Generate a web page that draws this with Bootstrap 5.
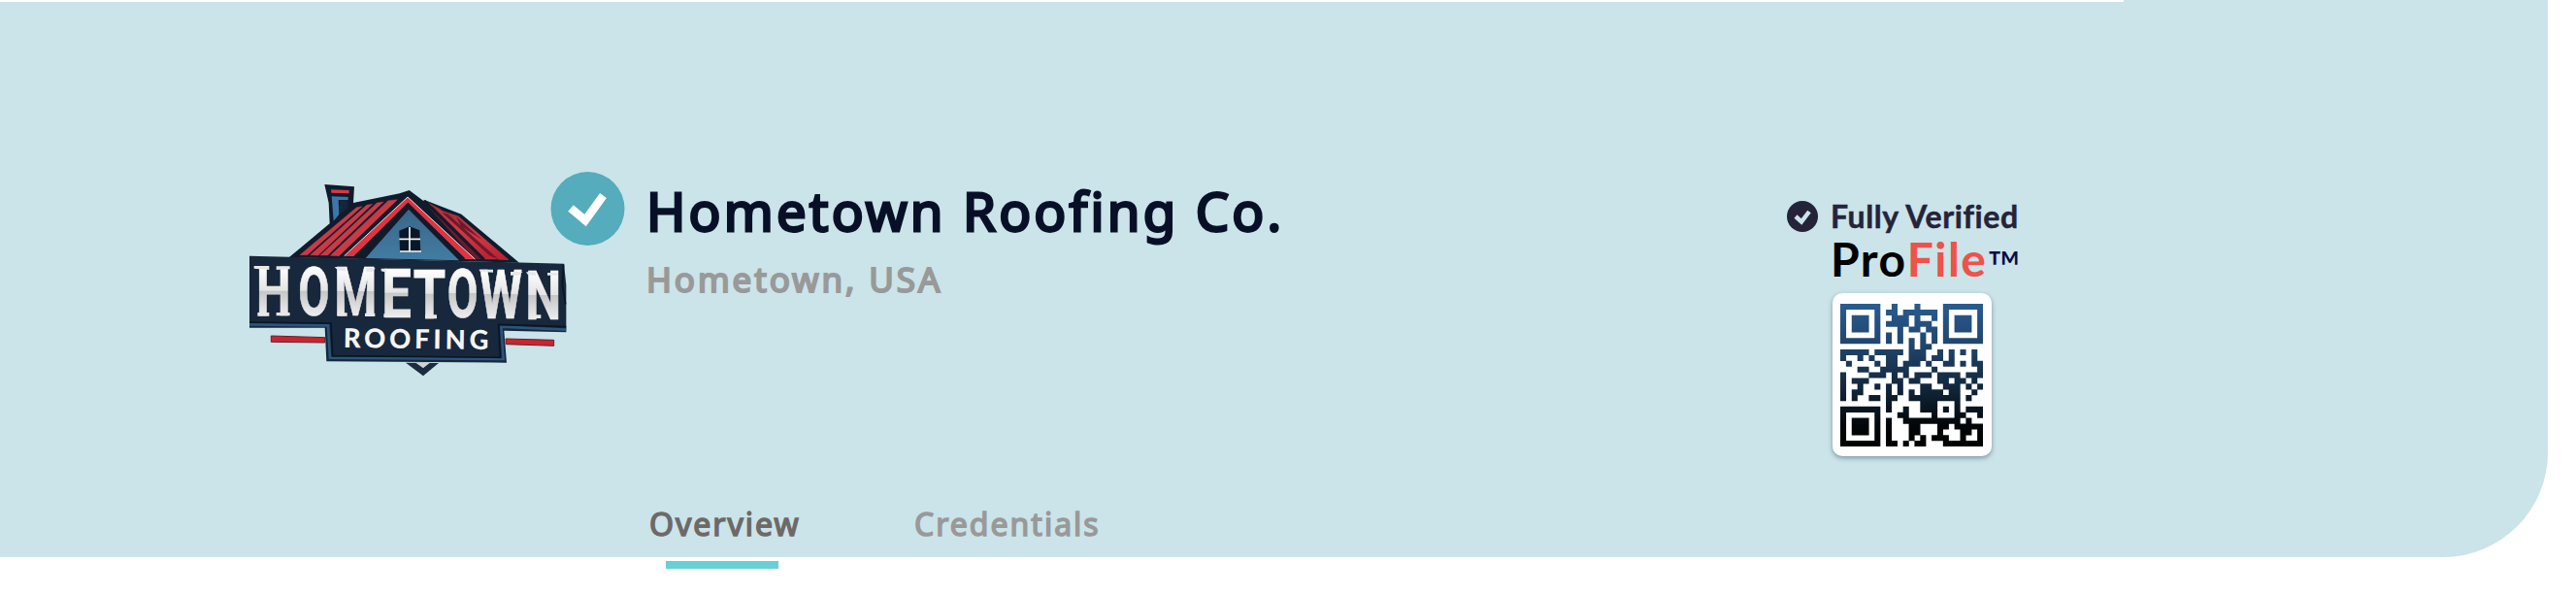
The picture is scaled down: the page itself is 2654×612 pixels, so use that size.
<!DOCTYPE html>
<html lang="en">
<head>
<meta charset="utf-8">
<title>Hometown Roofing Co.</title>
<meta name="viewport" content="width=device-width, initial-scale=1">
<link href="https://cdn.jsdelivr.net/npm/bootstrap@5.3.0/dist/css/bootstrap.min.css" rel="stylesheet">
<style>
body{background:#fff;font-family:"Noto Sans",sans-serif;overflow:hidden}
.hero{width:2625px;height:574px;background:linear-gradient(#fff,#fff) 0 0/2188px 2px no-repeat #cae4e9;border-bottom-right-radius:108px;padding-left:256px}
.hero-main{height:520px}
.logo{width:328px;height:200px;margin-top:189px;margin-right:-17px;flex:none}
.tick{width:77px;height:77px;margin-top:177px;flex:none}
.company{margin:185px 0 0 22px;width:1175px}
.company h1{font-size:54.5px;line-height:64px;font-weight:400;letter-spacing:3.2px;color:#081028;-webkit-text-stroke:2.8px #081028;margin:0 0 15px;white-space:nowrap}
.company p{font-size:35px;line-height:48px;letter-spacing:2.9px;color:#999;-webkit-text-stroke:2px #999;margin:0}
.profile{margin-top:205px;font-family:Lato,"Noto Sans",sans-serif}
.verified{font-size:32px;line-height:36px;font-weight:700;color:#25233a;letter-spacing:.6px;-webkit-text-stroke:.5px #25233a;white-space:nowrap}
.verified svg{width:32px;height:32px;margin-right:13px}
.brand{font-size:48px;line-height:44px;font-weight:700;color:#000;margin:4px 0 0 45px;letter-spacing:1.5px;white-space:nowrap}
.brand span{color:#ee5249}
.brand small{font-size:46px;font-weight:400;color:#0b0b45;line-height:44px;margin:8px 0 -8px 0;letter-spacing:0}
.qr-card{width:164px;height:168px;background:#fff;border-radius:10px;box-shadow:0 2px 5px rgba(0,40,50,.4);margin:13px 0 0 47px;padding:11px 8px}
.qr-card svg{width:147px;height:147px;display:block}
.tabs .nav-link{padding:0;font-size:32px;line-height:40px;color:#999;-webkit-text-stroke:1.5px #999;letter-spacing:2px}
.tabs{margin-left:413px}
.tabs .nav-link.active{color:#6d6968;-webkit-text-stroke-color:#6d6968;width:273px}
.tab-bar{width:116px;height:8px;margin:4px 0 0 686px;background:#68d0d5}
</style>
</head>
<body>
<header class="hero">
  <div class="hero-main d-flex align-items-start">
    <svg class="logo" viewBox="48 57 984 600" role="img" aria-label="Hometown Roofing">
      <defs>
        <linearGradient id="redRoof" x1="0" y1="0" x2="1" y2="1"><stop stop-color="#a82a3b"/><stop offset=".5" stop-color="#cf3945"/><stop offset="1" stop-color="#b91f2f"/></linearGradient>
        <linearGradient id="gable" x1="0" y1="0" x2="0" y2="1"><stop stop-color="#3b6688"/><stop offset="1" stop-color="#427ca3"/></linearGradient>
        <linearGradient id="silver" gradientUnits="userSpaceOnUse" x1="0" y1="-152" x2="0" y2="0"><stop stop-color="#fff"/><stop offset=".5" stop-color="#e4e4e4"/><stop offset=".51" stop-color="#c6c6c6"/><stop offset="1" stop-color="#ededed"/></linearGradient>
      </defs>
      <path d="M283 60L375 67L372 117L515 88L545 78L590 112L590 107L706 152L885 302L173 286L299 181L296 117Z" fill="#101b2c"/>
      <path d="M303 76L359 78L359 88L304 86Z" fill="#dc3845"/>
      <path d="M305 97L356 99L356 108L326 108L328 153L311 173Z" fill="#3b77a9"/>
      <path d="M330 110L356 109L355 135L330 152Z" fill="#12253b"/>
      <g fill="url(#redRoof)" stroke="#c94f59" stroke-width="1">
        <path d="M382 131L399 128L230 278L207 278Z"/><path d="M413 124L431 121L264 279L239 278Z"/>
        <path d="M445 117L465 114L293 279L270 279Z"/><path d="M480 110L508 107L328 281L301 280Z"/>
        <path d="M592 111L641 137L818 291L779 291Z"/><path d="M646 142L696 158L852 293L821 292Z"/>
      </g>
      <path d="M618 128L782 292L747 291L604 130ZM665 152L821 292L792 279L646 147ZM690 160L770 231L705 189Z" fill="#6b1a2b"/>
      <path d="M592 111L775 292" stroke="#101b2c" stroke-width="9"/>
      <path d="M540 98L344 282L373 282L540 120L718 291L748 291Z" fill="#df3442"/>
      <path d="M344 281L540 99L748 291" fill="none" stroke="#f5d7ce" stroke-width="3"/>
      <path d="M385 285L541 128L710 294" fill="none" stroke="#111a29" stroke-width="18"/>
      <path d="M543 137L410 288L699 295Z" fill="url(#gable)"/>
      <path d="M514 203L546 190L577 202L580 267L516 267Z" fill="#091827"/>
      <path d="M546 192V268M514 229H579M516 267H582" stroke="#f3f6fa" stroke-width="5"/>
      <path d="M51 281L1023 305L1030 371L1030 517L838 512L846 611L289 607L284 503L51 503Z" fill="#17273c"/>
      <path d="M51 493L294 496L300 596L836 600L829 500L1030 509" fill="none" stroke="#2c5479" stroke-width="8"/>
      <path d="M51 486L303 489L308 590L826 595L821 493L1030 500M1022 307L1018 370L1028 430" fill="none" stroke="#0a1524" stroke-width="5"/>
      <g fill="url(#silver)" stroke="url(#silver)" stroke-width="2" font-family="Roboto,sans-serif" font-weight="700" font-size="210">
        <text transform="translate(72 464) scale(.72 1)">H</text>
        <text transform="translate(202 464) scale(.67 1)">O</text>
        <text transform="translate(313 466) scale(.72 1)">M</text>
        <text transform="translate(460 470) scale(.78 1)">E</text>
        <text transform="translate(557 473) scale(.77 1)">T</text>
        <text transform="translate(662 472) scale(.66 1)">O</text>
        <text transform="translate(762 475) scale(.72 1)">W</text>
        <text transform="translate(904 477) scale(.75 1)">N</text>
      </g>
      <path d="M65 312H112V324L65 320ZM134 313H176V322L134 324ZM76 456H112V467H76ZM134 456H176V466H134ZM314 315H348V328L325 326ZM412 318H440L432 330H412ZM323 457H353V467H323ZM408 458H439V468H408ZM458 320H475V332L458 328ZM466 460H480V471H466ZM594 463H630V475H594ZM760 323H804V332L765 330ZM858 330H895L885 341H858ZM906 331H936V342L912 340ZM972 333H1004V341H972ZM918 463H952V474H918Z" fill="#e8e8e8"/>
      <text x="341" y="564" transform="rotate(.8 341 564)" font-family="Lato,sans-serif" font-weight="900" font-size="82" textLength="449" lengthAdjust="spacing" fill="#f4f5f6">ROOFING</text>
      <path d="M118 528L284 533L284 549L118 547ZM843 537L992 541L992 559L844 554Z" fill="#c92531" stroke="#65202d" stroke-width="3"/>
      <path d="M534 611L636 612L588 652Z" fill="#1b2c3e"/><path d="M566 612H608L588 628Z" fill="#ced3d6"/>
    </svg>
    <svg class="tick" viewBox="0 0 77 77" aria-hidden="true"><circle cx="38.500" cy="38" r="38" fill="#54acbc"/><path d="M21 37.500L36 50L54.500 24.500" fill="none" stroke="#fff" stroke-width="8.500"/></svg>
    <div class="company"><h1>Hometown Roofing Co.</h1><p>Hometown, USA</p></div>
    <aside class="profile">
      <div class="verified d-flex align-items-center">
        <svg viewBox="0 0 32 32" aria-hidden="true"><circle cx="16" cy="16" r="16" fill="#25233a"/><path d="M9 16L15 21.500L23 11" fill="none" stroke="#cae4e9" stroke-width="4.500"/></svg>
        <span>Fully Verified</span>
      </div>
      <div class="brand d-flex align-items-start">Pro<span>File</span><small>™</small></div>
      <div class="qr-card"><svg id="qr" viewBox="0 0 25 25" role="img" aria-label="QR code">
        <defs><linearGradient id="qrInk" gradientUnits="userSpaceOnUse" x1="0" y1="0" x2="0" y2="25"><stop stop-color="#295b91"/><stop offset=".3" stop-color="#204469"/><stop offset=".6" stop-color="#10253a"/><stop offset=".85" stop-color="#030609"/><stop offset="1" stop-color="#000"/></linearGradient></defs>
      </svg></div>
    </aside>
  </div>
  <nav class="nav tabs"><a class="nav-link active" href="#overview">Overview</a><a class="nav-link" href="#credentials">Credentials</a></nav>
</header>
<div class="tab-bar"></div>
<script>
const modules = [
  "#######..#...#....#######",
  "#.....#.##.######.#.....#",
  "#.###.#..###.#..#.#.###.#",
  "#.###.#.####.###..#.###.#",
  "#.###.#...#.##.##.#.###.#",
  "#.....#.#.#...#.#.#.....#",
  "#######.#.#.#.#.#.#######",
  "............#.##.........",
  "#####.#####.###..#.#.#.#.",
  "#..#.#..##..###.##.#...#.",
  ".#....#.##.###.#..##.#.##",
  "...##..#####....#.......#",
  "#....###.#.#.###.####.###",
  "#.###....##.##...##.##.#.",
  "#..#..#.#.#...##..###.#.#",
  "#.##....#.#.#.####.##..#.",
  "#.#..##.##..#########.#..",
  "........#.....###...#....",
  "#######.#..#..###.#.#.###",
  "#.....#...##....#...##..#",
  "#.###.#.#..##########.#..",
  "#.###.#.#...##...##.#####",
  "#.###.#.#...##...#...##.#",
  "#.....#.#...#.#.###..#..#",
  "#######.##.#.##...#######"
];
let d = "";
modules.forEach((row, y) => [...row].forEach((m, x) => { if (m === "#") d += `M${x} ${y}h1.03v1.03h-1.03z`; }));
const p = document.createElementNS("http://www.w3.org/2000/svg", "path");
p.setAttribute("d", d);
p.setAttribute("fill", "url(#qrInk)");
document.getElementById("qr").append(p);
</script>
<script src="https://cdn.jsdelivr.net/npm/bootstrap@5.3.0/dist/js/bootstrap.bundle.min.js"></script>
</body>
</html>
